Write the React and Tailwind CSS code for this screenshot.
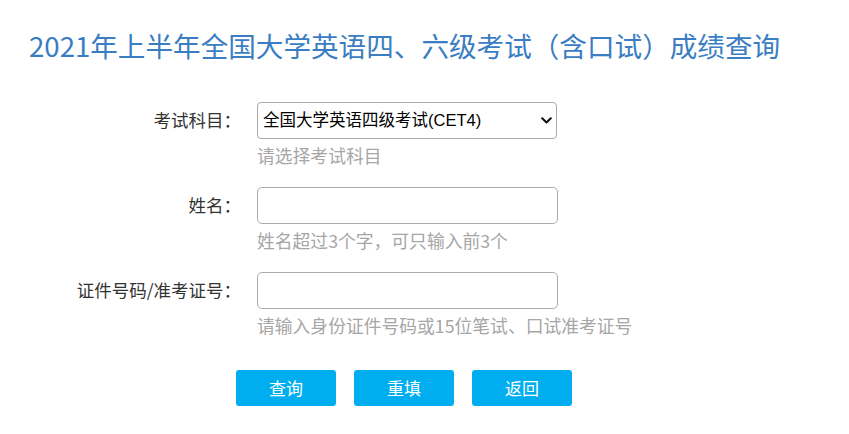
import React, { useState } from 'react';

const Field = ({ label, hint, children }) => (
  <>
    <label className="flex items-center justify-end h-[37px] text-[17.5px] text-[#333]">{label}</label>
    <div className="flex flex-col">
      {children}
      <p className="mt-1 mb-5 h-6 leading-6 text-[17.8px] text-[#a6a6a6] whitespace-nowrap">{hint}</p>
    </div>
  </>
);

export default function App() {
  const [subject, setSubject] = useState('CET4');
  const [name, setName] = useState('');
  const [idNo, setIdNo] = useState('');

  return (
    <div
      className="w-[849px] h-[434px] bg-white overflow-hidden [text-spacing-trim:space-all]"
      style={{ fontFamily: '"Noto Sans CJK SC", "Noto Sans", sans-serif' }}
    >
      <h1 className="pl-[29px] pt-[24px] h-[66px] text-[27.6px] leading-[42px] text-[#3a7dc2] whitespace-nowrap">
        2021年上半年全国大学英语四、六级考试（含口试）成绩查询
      </h1>

      <div className="mt-[36px] grid grid-cols-[241px_301px] gap-x-4">
        <Field label="考试科目：" hint="请选择考试科目">
          <div className="relative">
            <select
              value={subject}
              onChange={e => setSubject(e.target.value)}
              className="appearance-none w-[300px] h-[37px] pl-[5px] pr-8 rounded-[4px] border border-[#aaa] bg-white text-[16.5px] text-black outline-none"
              style={{ fontFamily: '"Liberation Sans", "Noto Sans CJK SC", sans-serif' }}
            >
              <option value="CET4">全国大学英语四级考试(CET4)</option>
              <option value="CET6">全国大学英语六级考试(CET6)</option>
            </select>
            <svg className="absolute right-[6px] top-[15px] pointer-events-none" width="11" height="7" viewBox="0 0 11 7" fill="none">
              <path d="M1.2 1.2 L5.5 5.5 L9.8 1.2" stroke="#111" strokeWidth="2" strokeLinecap="round" strokeLinejoin="round" />
            </svg>
          </div>
        </Field>

        <Field label="姓名：" hint="姓名超过3个字，可只输入前3个">
          <input
            value={name}
            onChange={e => setName(e.target.value)}
            className="w-[301px] h-[37px] px-2 rounded-[5px] border border-[#aaa] text-base outline-none"
          />
        </Field>

        <Field label="证件号码/准考证号：" hint="请输入身份证件号码或15位笔试、口试准考证号">
          <input
            value={idNo}
            onChange={e => setIdNo(e.target.value)}
            className="w-[301px] h-[37px] px-2 rounded-[5px] border border-[#aaa] text-base outline-none"
          />
        </Field>
      </div>

      <div className="mt-[13px] ml-[236px] flex gap-[18px]">
        <button className="w-[100px] h-[36px] rounded-[3px] bg-[#00aeef] text-white text-[17px]">查询</button>
        <button
          onClick={() => { setName(''); setIdNo(''); setSubject('CET4'); }}
          className="w-[100px] h-[36px] rounded-[3px] bg-[#00aeef] text-white text-[17px]"
        >
          重填
        </button>
        <button className="w-[100px] h-[36px] rounded-[3px] bg-[#00aeef] text-white text-[17px]">返回</button>
      </div>
    </div>
  );
}
